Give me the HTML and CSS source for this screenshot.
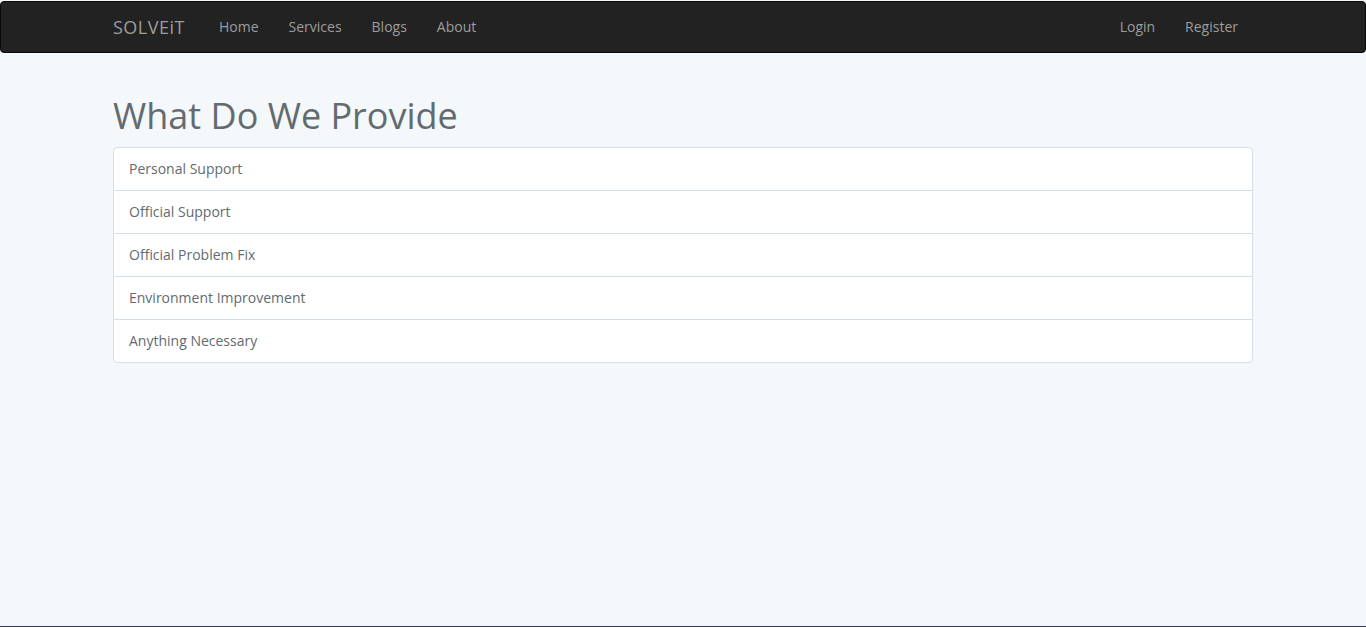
FILE: index.html
```html
<!DOCTYPE html>
<html lang="en">
<head>
<meta charset="utf-8">
<title>SOLVEiT</title>
<link rel="stylesheet" href="styles.css">
</head>
<body>
<div class="app">
  <nav class="navbar">
    <div class="container nav-inner">
      <div class="nav-left">
        <a class="brand" href="#">SOLVEiT</a>
        <a class="nav-link" href="#">Home</a>
        <a class="nav-link" href="#">Services</a>
        <a class="nav-link" href="#">Blogs</a>
        <a class="nav-link" href="#">About</a>
      </div>
      <div class="nav-right">
        <a class="nav-link" href="#">Login</a>
        <a class="nav-link" href="#">Register</a>
      </div>
    </div>
  </nav>
  <main class="container content">
    <h1 class="title">What Do We Provide</h1>
    <ul class="list-group">
      <li class="list-item">Personal Support</li>
      <li class="list-item">Official Support</li>
      <li class="list-item">Official Problem Fix</li>
      <li class="list-item">Environment Improvement</li>
      <li class="list-item">Anything Necessary</li>
    </ul>
  </main>
</div>
<footer class="footer"></footer>
</body>
</html>
```
FILE: styles.css
```css
* { box-sizing: border-box; }
html, body { margin: 0; padding: 0; }
body {
  background: #f5f8fa;
  font-family: "Open Sans", "Liberation Sans", sans-serif;
  font-size: 14px;
  line-height: 1.6;
  color: #636b6f;
}
.app { min-height: 626px; display: flow-root; }
.container {
  width: 1170px;
  margin: 0 auto;
  padding: 0 15px;
}
.content { display: flow-root; }
.navbar {
  background: #222;
  border: 1px solid #090909;
  border-radius: 4px;
  height: 52px;
  margin-top: 1px;
  margin-bottom: 21px;
}
.nav-inner {
  display: flex;
  justify-content: space-between;
  align-items: center;
  height: 50px;
}
.nav-left, .nav-right { display: flex; align-items: center; }
.brand {
  color: #9d9d9d;
  text-decoration: none;
  font-size: 18px;
  line-height: 20px;
  letter-spacing: 0.5px;
  padding: 15px 15px 15px 0;
  margin-right: 4px;
}
.nav-link {
  color: #9d9d9d;
  text-decoration: none;
  font-size: 14px;
  line-height: 20px;
  padding: 15px;
}
.title {
  font-size: 36px;
  font-weight: 400;
  line-height: 1.1;
  margin: 22px 0 11px;
  color: #636b6f;
}
.list-group {
  list-style: none;
  margin: 0;
  padding: 0;
  background: #fff;
  border: 1px solid #d3e0e9;
  border-radius: 4px;
}
.list-item {
  padding: 10px 15px;
  border-top: 1px solid #d3e0e9;
  height: 43px;
}
.list-item:first-child { border-top: none; height: 42px; }
.footer {
  height: 40px;
  background: #2c3e50;
}
```
